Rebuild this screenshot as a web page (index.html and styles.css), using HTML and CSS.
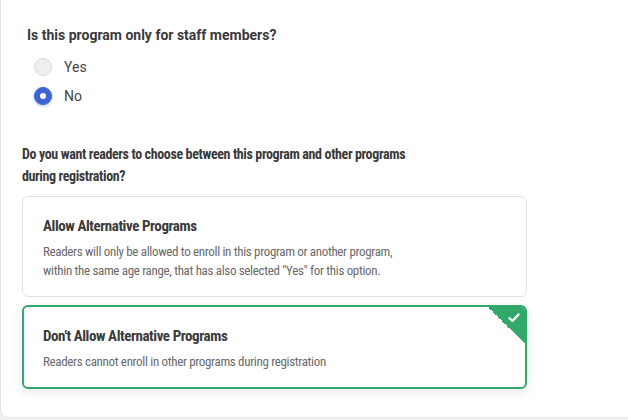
FILE: index.html
```html
<!DOCTYPE html>
<html>
<head>
<meta charset="utf-8">
<link rel="stylesheet" href="styles.css">
</head>
<body>
<div class="panel">
  <section class="question q1">
    <h3 class="q-title">Is this program only for staff members?</h3>
    <div class="radios">
      <label class="radio"><span class="dot"></span><span class="r-label">Yes</span></label>
      <label class="radio checked"><span class="dot"></span><span class="r-label">No</span></label>
    </div>
  </section>
  <section class="question q2">
    <h3 class="q-title">Do you want readers to choose between this program and other programs during registration?</h3>
    <div class="options">
      <div class="option">
        <div class="opt-title">Allow Alternative Programs</div>
        <p class="opt-desc">Readers will only be allowed to enroll in this program or another program, within the same age range, that has also selected "Yes" for this option.</p>
      </div>
      <div class="option selected">
        <div class="opt-title">Don't Allow Alternative Programs</div>
        <p class="opt-desc">Readers cannot enroll in other programs during registration</p>
        <span class="corner"><svg width="12" height="10" viewBox="0 0 12 10"><path d="M1.5 5.2 L4.5 8 L10.5 1.5" fill="none" stroke="#fff" stroke-width="2.2" stroke-linecap="round" stroke-linejoin="round"/></svg></span>
      </div>
    </div>
  </section>
</div>
</body>
</html>
```
FILE: styles.css
```css
* { box-sizing: border-box; }
html, body { margin: 0; padding: 0; }
body {
  background: #efefef;
  font-family: Roboto, "Liberation Sans", sans-serif;
  color: #333;
  width: 628px;
  height: 420px;
  overflow: hidden;
}
.panel {
  background: #fff;
  width: 660px;
  height: 417px;
  border-left: 1px solid #e4e4e4;
  border-bottom-left-radius: 8px;
  padding: 24px 0 0 21px;
}
.q-title {
  margin: 0;
  font-size: 14px;
  font-weight: 700;
  line-height: 22px;
  color: #3a3a3a;
  width: 500px;
}
.q1 .q-title { margin-left: 5px; }
.q2 .q-title { width: 395px; letter-spacing: -0.37px; }
.radios {
  display: flex;
  flex-direction: column;
  gap: 11px;
  margin-top: 12px;
  padding-left: 12px;
}
.radio {
  display: flex;
  align-items: center;
  gap: 12px;
  height: 18px;
  font-size: 14px;
  color: #444;
}
.dot {
  width: 18px;
  height: 18px;
  border-radius: 50%;
  background: #efefef;
  border: 1px solid #dcdcdc;
  display: flex;
  align-items: center;
  justify-content: center;
}
.radio.checked .dot {
  background: #3d63d2;
  border-color: #3d63d2;
  box-shadow: 0 1px 3px rgba(61, 99, 210, 0.4);
}
.radio.checked .dot::after {
  content: "";
  width: 6px;
  height: 6px;
  border-radius: 50%;
  background: #fff;
}
.q2 { margin-top: 38px; font-stretch: 75%; }
.options {
  display: flex;
  flex-direction: column;
  gap: 8px;
  margin-top: 9px;
}
.option {
  position: relative;
  width: 505px;
  border: 1px solid #e3e3e3;
  border-radius: 6px;
  padding: 19px 20px 16px 20px;
  overflow: hidden;
}
.option.selected {
  border: 2px solid #32a86a;
  padding: 19px 19px 16px 19px;
  box-shadow: 0 3px 12px rgba(0, 0, 0, 0.1);
}
.opt-title {
  font-size: 15px;
  font-weight: 700;
  line-height: 20px;
  color: #3a3a3a;
  letter-spacing: -0.42px;
}
.opt-desc {
  margin: 6px 0 0;
  font-size: 13px;
  line-height: 19px;
  color: #6a6a6a;
  max-width: 365px;
  letter-spacing: -0.33px;
}
.corner {
  position: absolute;
  top: 0;
  right: 0;
  width: 37px;
  height: 37px;
  background: linear-gradient(to bottom left, #32a86a 50%, transparent 50%);
}
.corner svg {
  position: absolute;
  top: 6px;
  right: 5px;
}
```
